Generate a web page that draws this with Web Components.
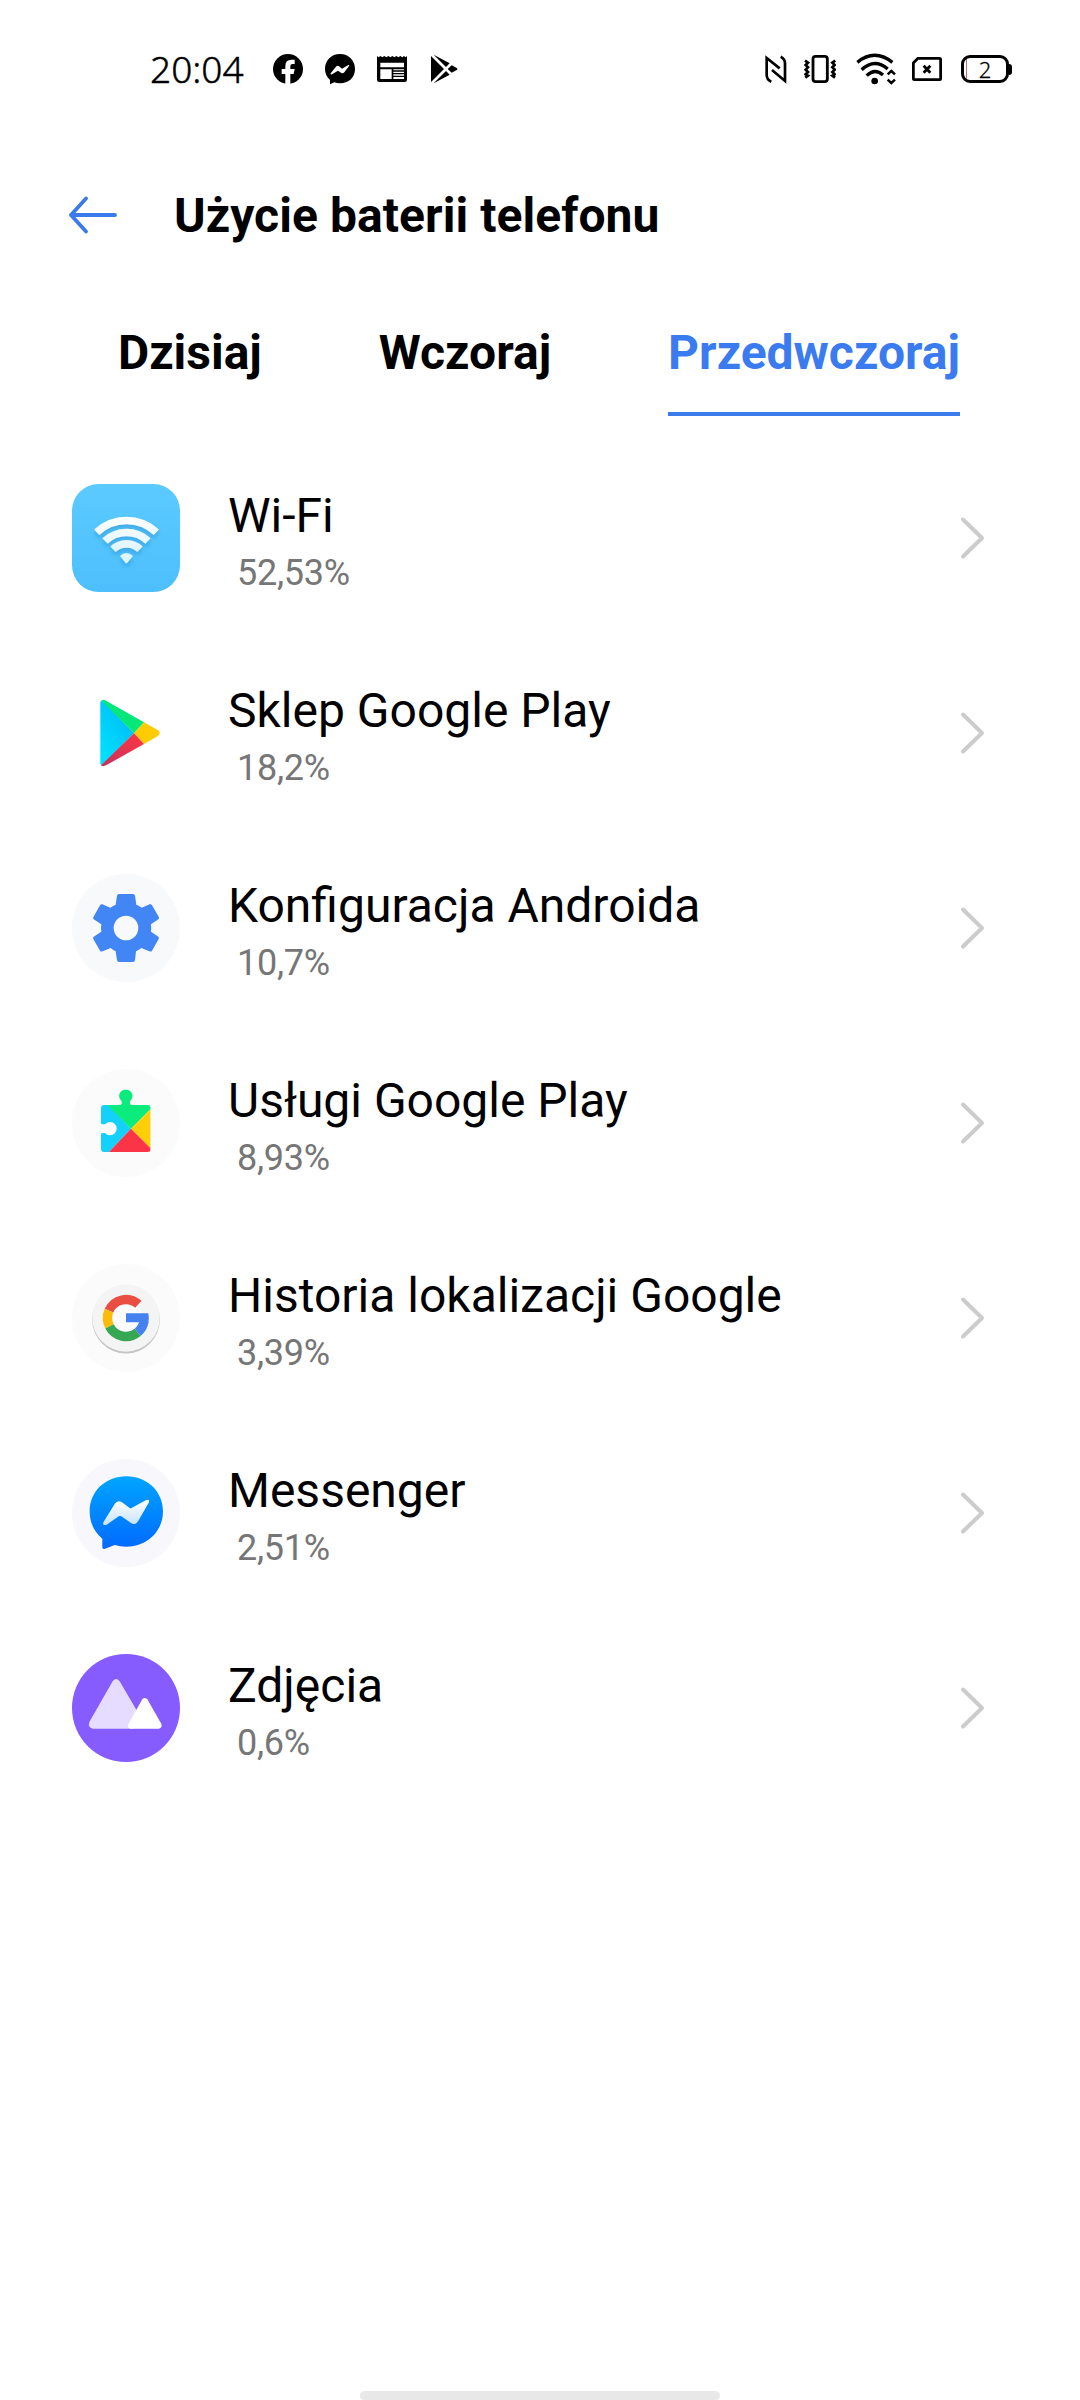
<!DOCTYPE html>
<html lang="pl">
<head>
<meta charset="utf-8">
<title>Użycie baterii telefonu</title>
<style>
html, body { margin: 0; padding: 0; background: #fff; }
</style>
</head>
<body>
<battery-page></battery-page>
<script>
const define = (name, html) => {
  const tpl = document.createElement('template');
  tpl.innerHTML = html;
  customElements.define(name, class extends HTMLElement {
    constructor() {
      super();
      this.attachShadow({ mode: 'open' }).append(tpl.content.cloneNode(true));
    }
  });
};

const GLYPHS = {
  facebook: [30, 32, '429 39 90 96', `<circle cx="474" cy="87" r="45"/><path fill="#fff" d="M466 133V102H455V87H466V78Q466 59 484 59H494V72H487Q481 72 481 79V87H494L491 102H481V133Z"/>`],
  messenger: [30, 32, '585 39 90 96', `<path d="M630 42C656 42 675 61 675 87S656 130 630 130Q621 130 613 127L600 133V120C591 112 585 101 585 87 585 61 604 42 630 42Z"/><path fill="#fff" d="M602 100L618 80Q622 75 627 79L636 86 655 75Q660 74 657 78L643 97Q638 102 633 98L624 92 606 103Q601 105 602 100Z"/>`],
  news: [30, 32, '741 39 90 96', `<path d="M741 48L746 52 751 48 757 52 763 48 769 52 775 48 781 52 787 48 793 52 799 48 805 52 811 48 817 52 822 48 827 52 831 48V119Q831 126 824 126H748Q741 126 741 119Z"/><path fill="#fff" d="M751 68H822V82H751ZM751 88H785V117H751ZM790 88H822V91H790ZM790 95H822V99H790ZM790 103H822V107H790ZM790 111H822V117H790Z"/>`],
  play: [30, 32, '897 39 90 96', `<path d="M903 48L942 87 903 126ZM911 44L959 70 948 81ZM953 87L965 76 979 83Q986 87 979 91L965 98ZM911 130L959 104 948 93Z"/>`],
  nfc: [22, 32, '47 39 66 96', `<g fill="none" stroke="#000" stroke-width="8"><path d="M66 125Q52 119 52 104V54L91 85"/><path d="M94 50Q107 56 107 70V123L68 90"/></g>`],
  vibrate: [32, 32, '163 39 96 96', `<g fill="none" stroke="#000"><rect x="190" y="49" width="43" height="76" rx="8" stroke-width="8.500"/><path stroke-width="8" d="M166 62L175 68 168 75 175 82 168 89 175 96 168 103 175 107 167 113M257 62L248 68 255 75 248 82 255 89 248 96 255 103 248 107 256 113"/></g>`],
  wifi: [40, 32, '319 39 120 96', `<g fill="none" stroke="#000" stroke-width="10"><path d="M323 67Q375 25 428 67M336 89Q375 53 414 87M351 107Q375 83 400 105"/><path stroke-width="7.500" d="M414 103L425 93 436 103M414 119L425 129 436 119"/></g><circle cx="375" cy="123" r="10"/>`],
  sim: [30, 32, '486 39 90 96', `<path fill="none" stroke="#000" stroke-width="8.500" stroke-linejoin="round" d="M504 55H568Q572 55 572 59V115Q572 119 568 119H494Q490 119 490 115V69Z"/><path stroke="#000" stroke-width="8.500" d="M521 77L541 98M541 77L521 98"/>`],
  back: [52, 44, '0 0 52 44', `<path fill="none" stroke="#3a7aea" stroke-width="3.8" stroke-linecap="round" stroke-linejoin="round" d="M20 5.5L5 22 20 38.500M5 22H49"/>`],
  chevron: [28, 44, '0 0 28 44', `<path fill="none" stroke="#ccc" stroke-width="4" stroke-linecap="round" stroke-linejoin="round" d="M4 3.500L23 22 4 40.500"/>`],
  'app-wifi': [108, 108, '66 42 324 324', `<defs><linearGradient id="g" x2="0" y2="1"><stop stop-color="#5bcaff"/><stop offset="1" stop-color="#4dbffc"/></linearGradient><linearGradient id="w" gradientUnits="userSpaceOnUse" x1="0" y1="137" x2="0" y2="280"><stop stop-color="#fff"/><stop offset="1" stop-color="#d3f1ff"/></linearGradient><filter id="s" x="-20%" y="-20%" width="140%" height="150%"><feDropShadow dx="0" dy="10" stdDeviation="7" flood-color="#1681c4" flood-opacity=".4"/></filter></defs><rect x="66" y="42" width="324" height="324" rx="80" fill="url(#g)"/><g filter="url(#s)"><g fill="none" stroke="url(#w)" stroke-width="23"><path d="M140 187A130.500 130.500 0 0 1 319 187M165 213A94 94 0 0 1 294 213M189 238A58 58 0 0 1 270 238"/></g><path fill="#dcf5ff" d="M210 258Q229 240 249 258L232 278Q229 281 226 278Z"/></g>`],
  'app-play': [108, 108, '67 627 324 324', `<defs><linearGradient id="b" x1="1" y1="0" x2="0.200" y2="1"><stop stop-color="#00b4f5"/><stop offset="1" stop-color="#00e1ff"/></linearGradient><linearGradient id="r" x1="1" x2="0" y2="1"><stop stop-color="#ff3743"/><stop offset="1" stop-color="#c6315d"/></linearGradient></defs><path fill="url(#b)" d="M158 691Q152 692 152 699V880Q152 886 156 887L253 790Z"/><path fill="#06e77a" d="M156 692Q161 687 169 692L283 757 253 790Z"/><path fill="#fdcc00" d="M283 757L325 781Q335 789 325 798L283 822 253 790Z"/><path fill="url(#r)" d="M253 790L283 822 169 886Q160 891 154 886Z"/>`],
  'app-gear': [108, 108, '66 627 324 324', `<g transform="translate(0 585)"><circle cx="228" cy="204" r="162" fill="#f8f9fb"/><path fill="#4285f4" fill-rule="evenodd" d="M207 102H249Q254 102 255 107L259 134Q267 137 275 143L299 133Q303 131 306 136L327 172Q328 176 325 178L303 193Q304 204 303 215L325 230Q328 233 326 237L306 272Q303 276 298 274L274 264Q267 270 258 274L255 300Q254 306 249 306H207Q202 306 201 300L197 274Q190 271 182 264L158 274Q153 276 150 272L130 237Q128 233 131 230L154 215Q152 204 154 193L131 178Q128 176 130 172L150 136Q153 131 157 133L181 143Q189 137 197 134L201 107Q202 102 207 102ZM228 167A37 37 0 1 0 228 241 37 37 0 1 0 228 167Z"/></g>`],
  'app-services': [108, 108, '66 627 324 324', `<defs><clipPath id="c"><path d="M162 735H210Q215 735 215 730V724A20 20 0 1 1 240 724V730Q240 735 245 735H293Q302 735 302 744V867Q302 876 293 876H162Q153 876 153 867V824Q153 819 158 819H165A20 20 0 1 0 165 793H158Q153 793 153 788V744Q153 735 162 735Z"/></clipPath></defs><circle cx="228" cy="789" r="162" fill="#fbfbfb"/><g clip-path="url(#c)"><path fill="#14d1fb" d="M140 700H175V735L243 806 173 880H140Z"/><path fill="#0bec7c" d="M172 735V680H310V739L243 806Z"/><path fill="#ffce08" d="M310 739V873L243 806Z"/><path fill="#fb3448" d="M243 806L312 875V880H173Z"/></g>`],
  'app-google': [108, 108, '66 42 324 324', `<circle cx="228" cy="204" r="162" fill="#fbfbfb"/><circle cx="228" cy="209" r="101.500" fill="#c4c4c4"/><circle cx="228" cy="204" r="101" fill="#f4f4f4"/><circle cx="228" cy="204" r="50" fill="#fcfcfc"/><g fill="none" stroke-width="28"><path stroke="#ea4e42" d="M265 163A55.500 55.500 0 0 0 177 182"/><path stroke="#fabc08" d="M177 182A55.500 55.500 0 0 0 178.500 229"/><path stroke="#36a853" d="M178.500 229A55.500 55.500 0 0 0 263 247"/><path stroke="#4682ef" d="M263 247A55.500 55.500 0 0 0 282 214"/></g><path fill="#4682ef" d="M228 190H295Q298 204 295 219L266 217H228Z"/>`],
  'app-messenger': [108, 108, '66 627 324 324', `<defs><linearGradient id="m" x2="0" y2="1"><stop stop-color="#00a5ff"/><stop offset="1" stop-color="#006aff"/></linearGradient><linearGradient id="n" x2="0" y2="1"><stop stop-color="#fff"/><stop offset="1" stop-color="#c7e2ff"/></linearGradient></defs><circle cx="228" cy="789" r="162" fill="#f7f7fc"/><path fill="url(#m)" d="M229 679C292 679 339 725 339 784S292 890 229 890Q212 890 194 885L165 896Q157 899 157 891V866C133 847 119 818 119 784 119 725 166 679 229 679Z"/><path fill="url(#n)" d="M161 815L194 762Q202 749 216 757L238 773Q242 776 246 773L287 751Q300 746 297 757L266 811Q257 828 243 819L214 799Q210 797 206 799L170 824Q155 829 161 815Z"/>`],
  'app-photos': [108, 108, '66 42 324 324', `<circle cx="228" cy="204" r="162" fill="#865cff"/><path fill="#e6dcff" d="M188 124Q198 110 209 124L259 209 250 266H128Q113 263 118 246Z"/><path fill="#fff" d="M277 178Q284 170 292 178L333 250Q339 263 327 266H242Q231 264 235 252Z"/>`]
};

customElements.define('line-icon', class extends HTMLElement {
  connectedCallback() {
    if (this.shadowRoot) return;
    const [w, h, box, body] = GLYPHS[this.getAttribute('name')];
    this.attachShadow({ mode: 'open' }).innerHTML =
      `<style>:host{display:block;flex:none}svg{display:block}</style><svg width="${w}" height="${h}" viewBox="${box}">${body}</svg>`;
  }
});

define('battery-badge', `<style>
:host{display:flex;align-items:center;width:51px;height:28px}
.cell{box-sizing:border-box;width:48px;height:28px;border:3px solid #000;border-radius:9px;display:flex;align-items:center;justify-content:center;font:300 22px/22px "Noto Sans",sans-serif;-webkit-text-stroke:.3px #000;background:linear-gradient(#c96a78,#c96a78) 2px 0/1px 100% no-repeat}
.tip{width:3px;height:11px;background:#000;border-radius:0 3px 3px 0}
</style><div class="cell">2</div><div class="tip"></div>`);

define('status-bar', `<style>
:host{display:flex;align-items:flex-start;box-sizing:border-box;height:120px;padding:53px 68px 0 150px}
.clock{font:300 37px/32px "Noto Sans",sans-serif;-webkit-text-stroke:.45px #000;width:123px;white-space:nowrap}
.apps{display:flex;gap:22px}
.sys{display:flex;margin-left:auto}
line-icon[name=vibrate]{margin-left:17px}
line-icon[name=wifi]{margin-left:20px}
line-icon[name=sim]{margin-left:16px}
battery-badge{margin:2px 0 0 19px}
</style><div class="clock">20:04</div>
<div class="apps"><line-icon name="facebook"></line-icon><line-icon name="messenger"></line-icon><line-icon name="news"></line-icon><line-icon name="play"></line-icon></div>
<div class="sys"><line-icon name="nfc"></line-icon><line-icon name="vibrate"></line-icon><line-icon name="wifi"></line-icon><line-icon name="sim"></line-icon><battery-badge></battery-badge></div>`);

define('title-bar', `<style>
:host{display:flex;align-items:center;height:56px;padding:67px 0 0 66px;gap:56px}
h1{margin:0;padding-top:2px;font:700 48px/56px Roboto,sans-serif;letter-spacing:.06px;color:#000;white-space:nowrap}
</style><line-icon name="back"></line-icon><h1><slot></slot></h1>`);

define('day-tab', `<style>
:host{display:block;font:700 48px/56px Roboto,sans-serif;color:#000;padding-bottom:31px;border-bottom:4px solid transparent;white-space:nowrap}
:host([active]){color:#3a7bf0;border-color:#3b7cec}
</style><slot></slot>`);

define('day-tabs', `<style>
:host{display:flex;justify-content:space-between;padding:82px 120px 0 118px;height:91px}
</style><slot></slot>`);

define('usage-row', `<style>
:host{display:flex;align-items:flex-start;height:195px;box-sizing:border-box;padding:44px 93px 0 72px}
.text{margin:4px 0 0 48px;flex:1;font-family:Roboto,sans-serif;white-space:nowrap}
.name{font-size:48px;line-height:56px;color:#000}
.share{font-size:36px;line-height:42px;margin-top:8px;padding-left:9px;color:#767676;letter-spacing:-.25px}
line-icon[name=chevron]{margin-top:32px}
</style><slot name="icon"></slot><div class="text"><div class="name"><slot></slot></div><div class="share"><slot name="share"></slot></div></div><line-icon name="chevron"></line-icon>`);

define('home-handle', `<style>
:host{display:block;width:360px;height:9px;border-radius:5px;background:#e8e8e8;margin:auto auto 0}
</style>`);

const rows = [
  ['app-wifi', 'Wi-Fi', '52,53%'],
  ['app-play', 'Sklep Google Play', '18,2%'],
  ['app-gear', 'Konfiguracja Androida', '10,7%'],
  ['app-services', 'Usługi Google Play', '8,93%'],
  ['app-google', 'Historia lokalizacji Google', '3,39%'],
  ['app-messenger', 'Messenger', '2,51%'],
  ['app-photos', 'Zdjęcia', '0,6%']
];

define('battery-page', `<style>
:host{display:flex;flex-direction:column;width:1080px;height:2400px;box-sizing:border-box;background:#fff;overflow:hidden}
main{margin-top:24px}
</style>
<status-bar></status-bar>
<title-bar>Użycie baterii telefonu</title-bar>
<day-tabs><day-tab>Dzisiaj</day-tab><day-tab>Wczoraj</day-tab><day-tab active>Przedwczoraj</day-tab></day-tabs>
<main>${rows.map(([icon, name, share]) => `<usage-row><line-icon slot="icon" name="${icon}"></line-icon>${name}<span slot="share">${share}</span></usage-row>`).join('')}</main>
<home-handle></home-handle>`);
</script>
</body>
</html>
